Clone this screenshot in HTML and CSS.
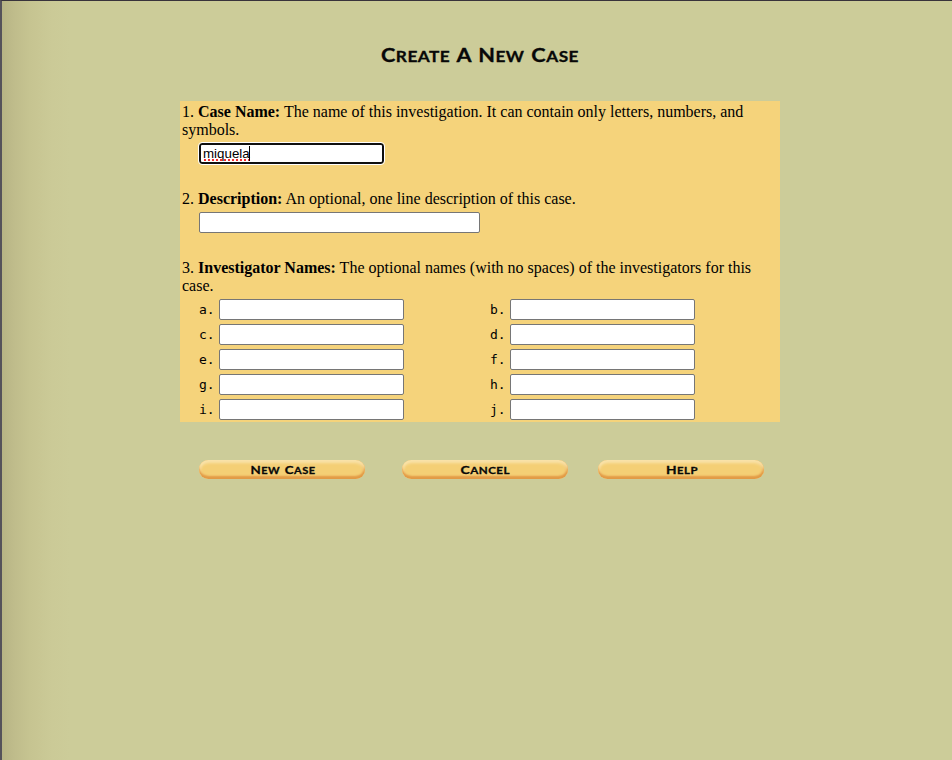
FILE: index.html
```html
<!DOCTYPE html>
<html lang="en">
<head>
<meta charset="utf-8">
<title>Create A New Case</title>
<link rel="stylesheet" href="styles.css">
</head>
<body>
<main>
<h1><svg class="title" width="198" height="18" viewBox="0 0 198 18"><text y="15" textLength="198" lengthAdjust="spacingAndGlyphs">C<tspan class="sm">REATE</tspan> A N<tspan class="sm">EW</tspan> C<tspan class="sm">ASE</tspan></text></svg></h1>
<form>
<section class="panel">
<p>1. <b>Case Name:</b> The name of this investigation. It can contain only letters, numbers, and symbols.</p>
<div class="field focused" role="textbox" tabindex="0"><span class="typed">miquela</span><i class="caret"></i></div>
<p class="gap">2. <b>Description:</b> An optional, one line description of this case.</p>
<input class="field wide" type="text" aria-label="Description">
<p class="gap">3. <b>Investigator Names:</b> The optional names (with no spaces) of the investigators for this case.</p>
<div class="names">
<label>a.<input class="field"></label><label>b.<input class="field"></label>
<label>c.<input class="field"></label><label>d.<input class="field"></label>
<label>e.<input class="field"></label><label>f.<input class="field"></label>
<label>g.<input class="field"></label><label>h.<input class="field"></label>
<label>i.<input class="field"></label><label>j.<input class="field"></label>
</div>
</section>
<div class="actions">
<button type="button"><svg width="166" height="19"><text x="51.5" y="13.5" textLength="65" lengthAdjust="spacingAndGlyphs">N<tspan class="sm">EW</tspan> C<tspan class="sm">ASE</tspan></text></svg></button>
<button type="button"><svg width="166" height="19"><text x="58.5" y="13.5" textLength="49.5" lengthAdjust="spacingAndGlyphs">C<tspan class="sm">ANCEL</tspan></text></svg></button>
<button type="button"><svg width="166" height="19"><text x="68" y="13.5" textLength="32" lengthAdjust="spacingAndGlyphs">H<tspan class="sm">ELP</tspan></text></svg></button>
</div>
</form>
</main>
</body>
</html>
```
FILE: styles.css
```css
* { box-sizing: border-box; }
body {
  margin: 0;
  min-height: 760px;
  border-top: 1px solid #38333b;
  border-left: 2px solid #55525a;
  background: linear-gradient(90deg, #b5b283 0, #bfbc8b 14px, #c6c491 30px, #cbca97 52px, #cccc99 70px);
  font: 16px/18px "Liberation Serif", serif;
  color: #000;
}
main { width: 600px; margin-left: 178px; padding-top: 46px; }
h1 { margin: 0; height: 54px; text-align: center; line-height: 0; }
svg { display: block; overflow: visible; }
.title { margin: 0 auto; }
svg text { font: 700 18px Lato, sans-serif; letter-spacing: 0.4px; word-spacing: 1px; fill: #080808; stroke: #080808; stroke-width: 0.3px; }
.title .sm { font-size: 14.3px; }
.panel { height: 321px; padding: 2px; background: #f5d37b; }
p { margin: 0; }
.gap { margin-top: 26px; }
.field {
  display: block;
  width: 185px;
  height: 21px;
  border: 1px solid #767676;
  border-radius: 2px;
  background: #fff;
  padding: 1px 2px;
  font: 13.333px/15px "Liberation Sans", sans-serif;
}
.panel > .field { margin: 4px 0 0 17px; }
.focused { border: 2px solid #101010; border-radius: 3px; outline: 1px solid #fff; display: flex; }
.typed {
  height: 15px;
  background: radial-gradient(circle at 2px 1px, #f03030 0.8px, transparent 1.6px) 0 13px / 4px 2px repeat-x;
}
.caret { width: 1px; height: 15px; margin-left: -1px; background: #000; }
.wide { width: 281px; }
.names {
  display: grid;
  grid-template-columns: 291px 291px;
  row-gap: 4px;
  padding: 4px 0 0 17px;
  font: 13px/21px "DejaVu Sans Mono", monospace;
}
.names label { display: grid; grid-template-columns: 20px 185px; }
.actions { display: flex; padding: 38px 0 0 19px; }
button {
  width: 166px;
  height: 19px;
  margin: 0 37px 0 0;
  padding: 0;
  border: 0;
  border-radius: 10px;
  background: #f4cf75;
  box-shadow: inset 0 -3px 2px #e29a45, inset 0 3px 3px #f9e3aa, inset -2px 0 2px #ecb563, inset 2px 0 2px #f8d990;
}
button + button { margin-right: 30px; }
button text { font-size: 11.8px; }
button .sm { font-size: 9.8px; }
```
